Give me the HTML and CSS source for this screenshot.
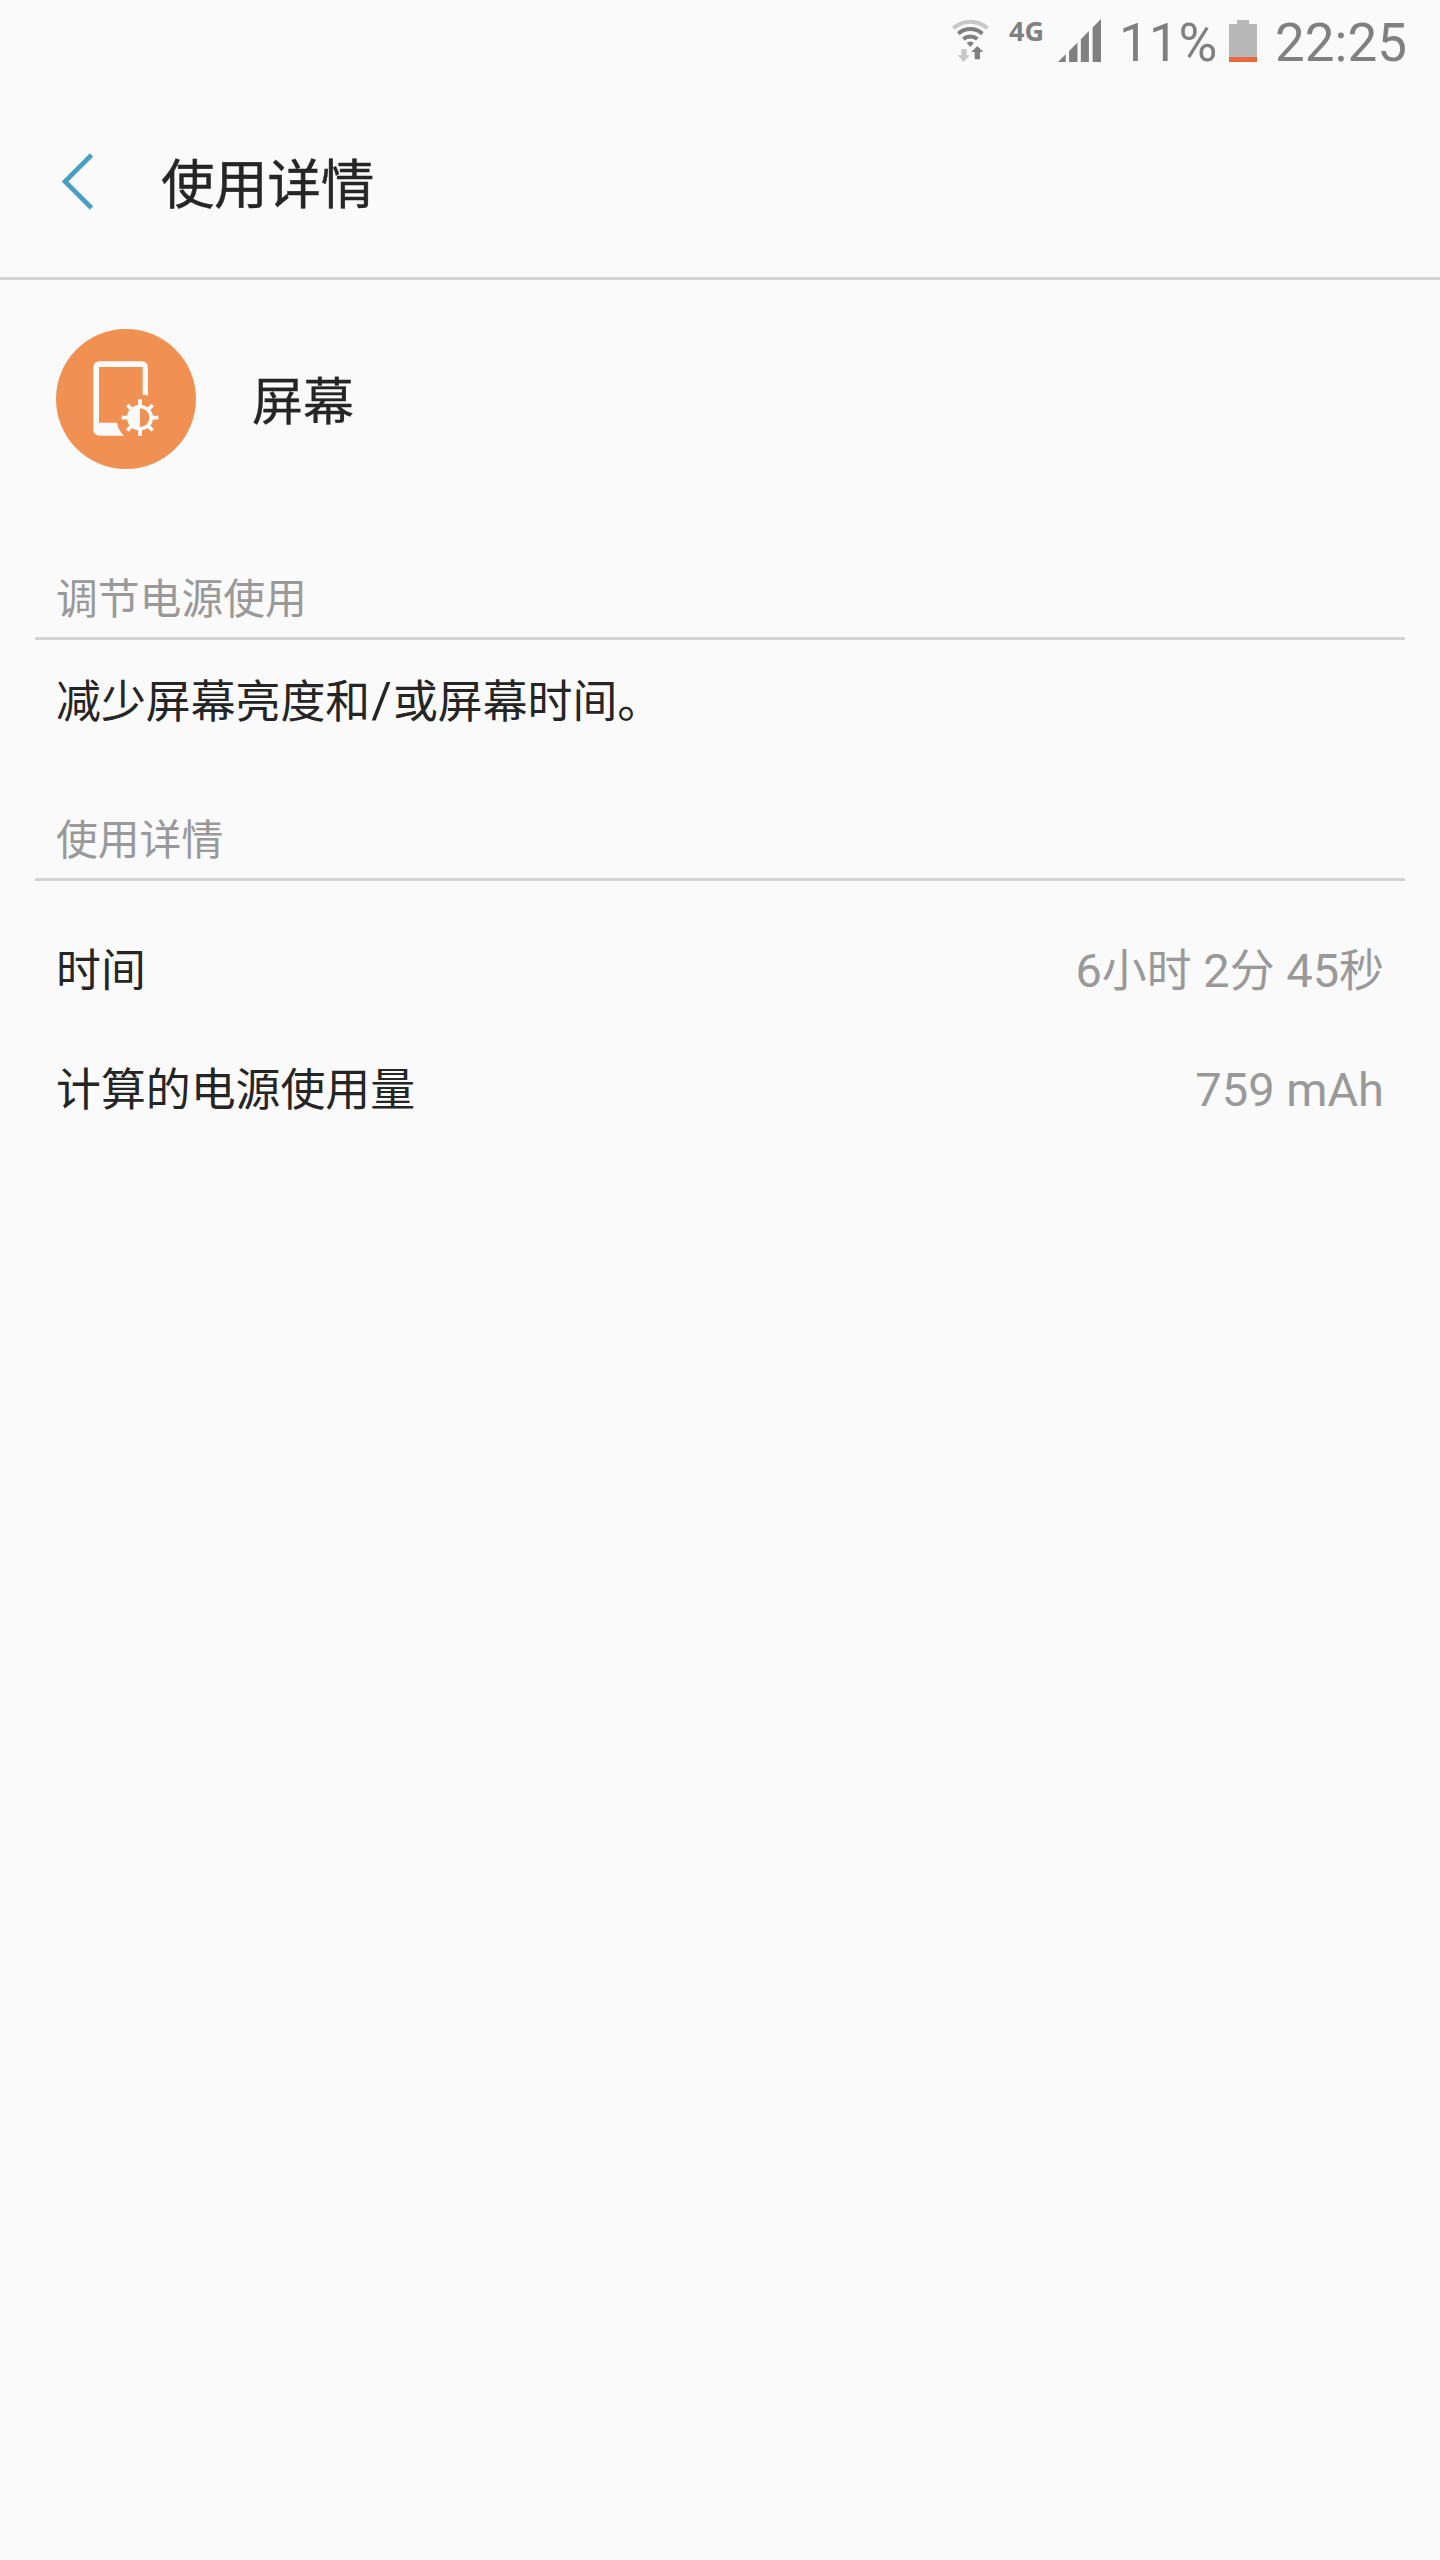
FILE: index.html
```html
<!DOCTYPE html>
<html lang="zh-CN">
<head>
  <meta charset="UTF-8">
  <title>使用详情</title>
  <meta name="viewport" content="width=device-width, initial-scale=1.0">
  <link rel="stylesheet" href="styles.css">
</head>
<body>
  <div class="status-bar">
    <svg class="wifi" viewBox="0 0 111 129">
      <g fill="none" stroke-width="12">
        <path class="dim-stroke" d="M4 28A76 76 0 0 1 106 28"/>
        <path d="M19 44A54 54 0 0 1 91 44"/>
        <path d="M34 60A32 32 0 0 1 76 60"/>
      </g>
      <path d="M44 72Q55 63 66 72L55 84Z"/>
      <path class="dim" d="M28 90H44V109H53L35 129L17 109H28Z"/>
      <path d="M76 81L94 99H84V121H68V99H58Z"/>
    </svg>
    <span class="network">4G</span>
    <svg class="signal" viewBox="0 0 128 128">
      <path d="M0 128L23 105V128ZM33 128V95L58 70V128ZM68 128V60L92 36V128ZM103 128V25L128 0V128Z"/>
    </svg>
    <span class="percent">11%</span>
    <svg class="battery" viewBox="0 0 28 42">
      <path d="M8 0H20V4H28V37H0V4H8Z"/>
      <path class="level" d="M0 37H28V42H0Z"/>
    </svg>
    <span class="clock">22:25</span>
  </div>

  <header>
    <svg class="back" viewBox="0 0 32 58">
      <path d="M29.5 2L3 28.5L29.5 55"/>
    </svg>
    <h1>使用详情</h1>
  </header>

  <main>
    <div class="app">
      <svg class="app-icon" viewBox="0 0 420 420">
        <circle class="disc" cx="210" cy="210" r="210"/>
        <path d="M132 97H256Q276 97 276 117V200Q268 197 260 197V114H129V281H183Q187 305 204 320H132Q112 320 112 300V117Q112 97 132 97Z"/>
        <circle cx="252" cy="266" r="39"/>
        <path class="disc" d="M252 238A28 28 0 0 1 252 294Z"/>
        <g class="rays">
          <path d="M252 211V232M252 300V321M197 266H218M286 266H307"/>
          <path d="M214 228L227 241M277 291L290 304M290 228L277 241M227 291L214 304"/>
        </g>
      </svg>
      <span class="app-name">屏幕</span>
    </div>

    <h2>调节电源使用</h2>
    <p class="tip">减少屏幕亮度和<span class="slash">/</span>或屏幕时间。</p>

    <h2>使用详情</h2>
    <div class="details">
      <div class="row">
        <span>时间</span>
        <span class="value"><span class="num">6</span>小时<span class="num"> 2</span>分<span class="num"> 45</span>秒</span>
      </div>
      <div class="row">
        <span>计算的电源使用量</span>
        <span class="value"><span class="num">759 mAh</span></span>
      </div>
    </div>
  </main>
</body>
</html>
```

FILE: styles.css
```css
* { box-sizing: border-box; }

body {
  margin: 0;
  min-height: 2560px;
  background: #fafafa;
  color: #252525;
  font-family: 'Noto Sans CJK SC', sans-serif;
}

svg { display: block; flex: none; }

h1, h2, p { margin: 0; font-weight: normal; }

.num { font-family: Roboto, sans-serif; font-size: 47px; line-height: 1; }

/* status bar */
.status-bar {
  display: flex;
  justify-content: flex-end;
  align-items: flex-start;
  height: 84px;
  padding-right: 33px;
  color: #808080;
  fill: #808080;
  font-family: Roboto, sans-serif;
  font-size: 53px;
  line-height: 86px;
}

.wifi { width: 37px; height: 43px; margin: 19px 20px 0 0; }
.wifi g { stroke: #808080; }
.wifi .dim { fill: #c8c8c8; }
.wifi .dim-stroke { stroke: #c8c8c8; }

.network {
  width: 49px;
  font-family: 'Open Sans', sans-serif;
  font-size: 27px;
  font-weight: bold;
  line-height: 62px;
}

.signal { width: 43px; height: 43px; margin-top: 19px; }
.percent { width: 110px; margin-left: 18px; }
.battery { width: 28px; height: 42px; margin-top: 20px; fill: #b8b8b8; }
.battery .level { fill: #e86840; }
.clock { margin-left: 18px; }

/* header */
header {
  display: flex;
  align-items: center;
  height: 196px;
  padding-left: 62px;
  border-bottom: 3px solid #d3d3d3;
}

header h1 {
  margin-left: 67px;
  font-size: 53.3px;
  line-height: 80px;
  -webkit-text-stroke: 0.5px #252525;
}

.back {
  width: 32px;
  height: 58px;
  margin-top: 3px;
  fill: none;
  stroke: #4a9fc0;
  stroke-width: 4.6;
}

/* app */
.app {
  display: flex;
  align-items: center;
  height: 236px;
  padding: 2px 56px 0;
}

.app-icon { width: 140px; height: 140px; fill: #fafafa; }
.app-icon .disc { fill: #f09052; }
.app-icon .rays { stroke: #fafafa; stroke-width: 11; }

.app-name {
  margin-left: 56px;
  padding-bottom: 3px;
  font-size: 51px;
  line-height: 76px;
  -webkit-text-stroke: 0.3px #252525;
}

main h2 {
  height: 124px;
  margin: 0 35px;
  padding: 50px 21px 0;
  border-bottom: 3px solid #d3d3d3;
  color: #999;
  font-size: 41.8px;
  line-height: 60px;
}

.tip {
  height: 117px;
  padding: 0 56px;
  font-size: 44.9px;
  line-height: 117px;
}

.slash {
  margin: 0 1px;
  font-family: Roboto, sans-serif;
  font-size: 50px;
  line-height: 1;
}

.details { padding: 27px 56px 0; }

.row {
  display: flex;
  justify-content: space-between;
  height: 119px;
  font-size: 44.9px;
  line-height: 119px;
}

.value { color: #999; white-space: pre; }
```
